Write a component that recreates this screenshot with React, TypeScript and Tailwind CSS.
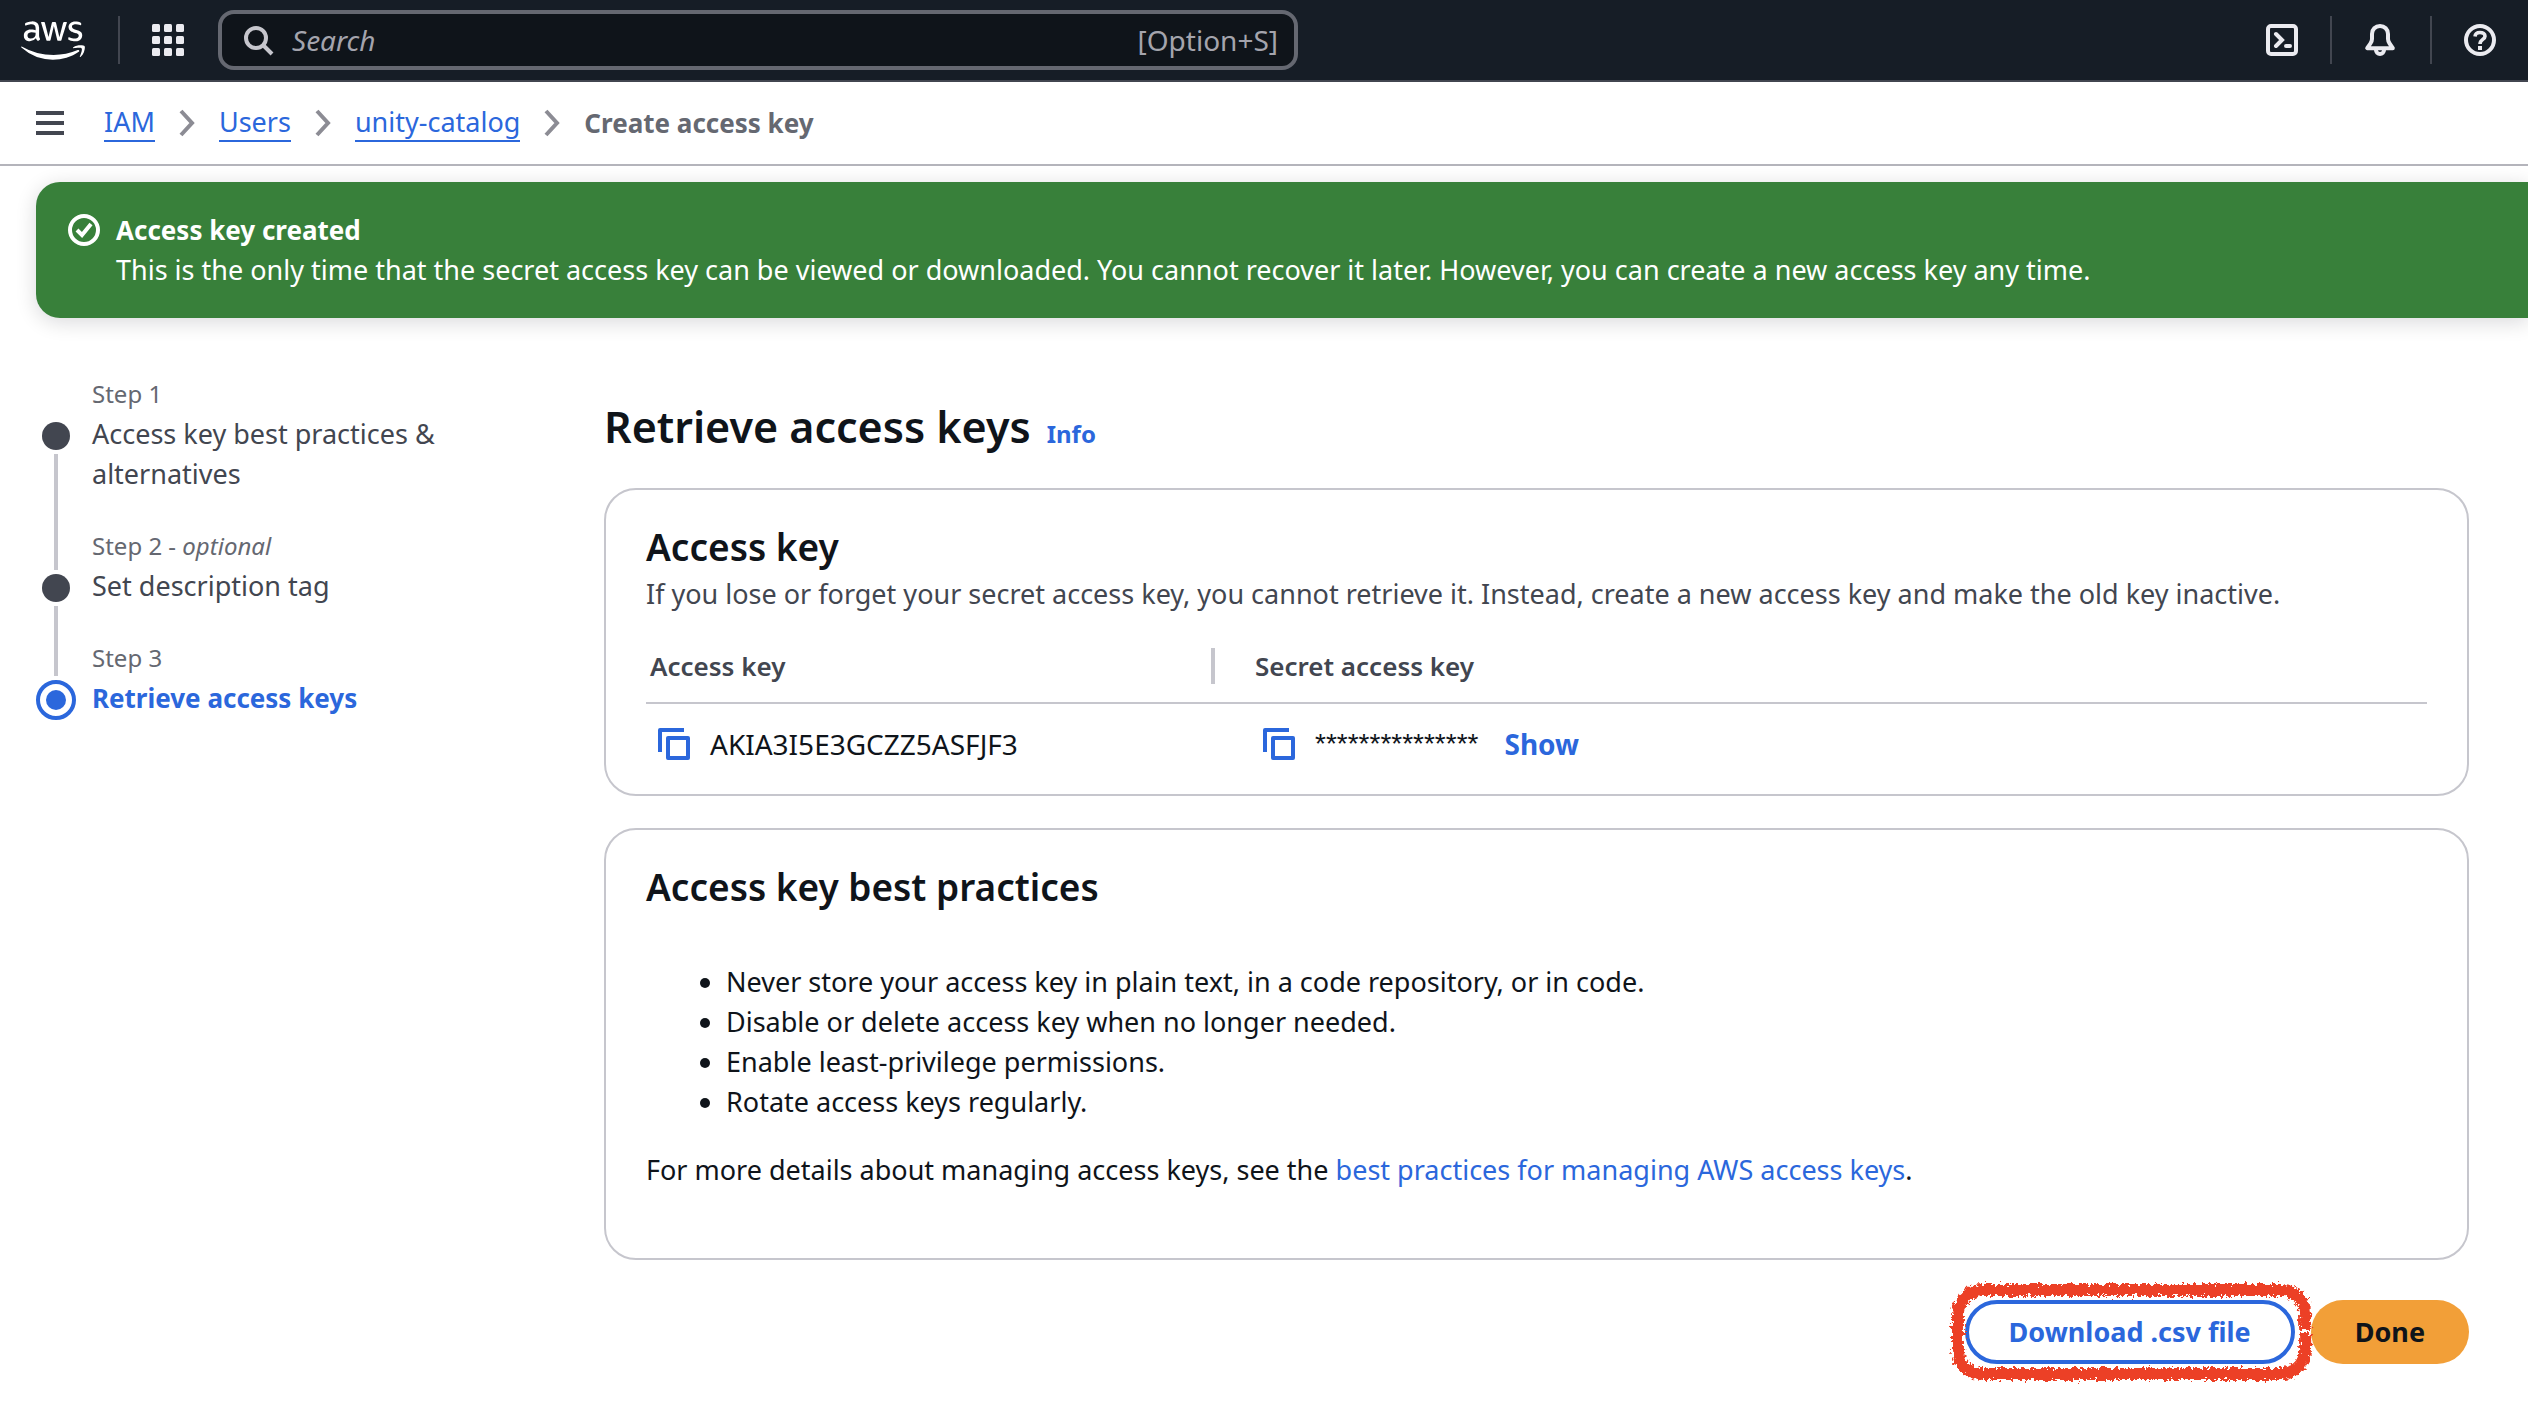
import type { ReactNode } from 'react';
import { FaAws } from 'react-icons/fa';

function Icon({ children, className = '' }: { children: ReactNode; className?: string }) {
  return (
    <svg
      viewBox="0 0 32 32"
      fill="none"
      stroke="currentColor"
      strokeWidth="4"
      aria-hidden="true"
      className={`size-8 shrink-0 ${className}`}
    >
      {children}
    </svg>
  );
}

function AppsIcon() {
  return (
    <Icon>
      <g fill="currentColor" stroke="none">
        {[0, 12, 24].map((y) =>
          [0, 12, 24].map((x) => <rect key={`${x}-${y}`} x={x} y={y} width="8" height="8" rx="1.5" />),
        )}
      </g>
    </Icon>
  );
}

function CopyIcon() {
  return (
    <Icon>
      <path d="M26 2H2v22" strokeLinejoin="round" />
      <rect x="10" y="10" width="20" height="20" strokeLinejoin="round" />
    </Icon>
  );
}

function Chevron() {
  return (
    <svg viewBox="0 0 16 28" fill="none" stroke="#8c8c94" strokeWidth="4" aria-hidden="true" className="h-7 w-4 shrink-0">
      <path d="M2 2l11 12L2 26" />
    </svg>
  );
}

/* Hand-drawn marker outline around a highlighted button. */
function MarkerOutline() {
  return (
    <svg
      viewBox="0 0 371 112"
      preserveAspectRatio="none"
      fill="none"
      stroke="#ec4125"
      aria-hidden="true"
      className="pointer-events-none absolute -left-5 -top-6 h-[calc(100%+48px)] w-[calc(100%+40px)]"
    >
      <defs>
        <filter id="marker" x="0" y="0" width="371" height="112" filterUnits="userSpaceOnUse">
          <feTurbulence type="fractalNoise" baseFrequency="0.3" numOctaves="3" seed="4" result="noise" />
          <feDisplacementMap in="SourceGraphic" in2="noise" scale="10" xChannelSelector="R" yChannelSelector="G" />
        </filter>
      </defs>
      <path
        filter="url(#marker)"
        d="M361 54V38a24 24 0 0 0-24-24H37a24 24 0 0 0-24 24v36a24 24 0 0 0 24 24h300a24 24 0 0 0 24-24V57"
        strokeWidth="12"
      />
    </svg>
  );
}

function Header() {
  return (
    <header className="flex h-[82px] items-center border-b-2 border-[#424650] bg-[#161d26] text-[#ebebf0]">
      <a href="#home" aria-label="AWS home" className="ml-[21px] text-white">
        <FaAws className="h-[51px] w-16" />
      </a>
      <div className="ml-[33px] h-12 w-0.5 bg-[#424650]" />
      <button type="button" aria-label="Services" className="ml-8">
        <AppsIcon />
      </button>
      <label className="ml-[34px] flex h-[60px] w-[1080px] items-center rounded-2xl border-4 border-[#656871] bg-[#0f141a] pr-4 pl-5">
        <Icon className="text-[#c6c6cd]">
          <circle cx="14" cy="14" r="10" />
          <path d="M21 21l9 9" />
        </Icon>
        <input
          type="search"
          aria-label="Search"
          placeholder="Search"
          className="ml-[18px] min-w-0 flex-1 bg-transparent text-[28px] leading-10 outline-none placeholder:text-[#a4a4ad] placeholder:italic"
        />
        <span className="text-[28px] text-[#a4a4ad]">[Option+S]</span>
      </label>
      <div className="ml-auto flex items-center pr-8">
        <button type="button" aria-label="CloudShell">
          <Icon>
            <rect x="2" y="2" width="28" height="28" rx="3" />
            <path d="M10 10l6 6-6 6M20 22h4" strokeLinecap="round" />
          </Icon>
        </button>
        <div className="mx-8 h-12 w-0.5 bg-[#424650]" />
        <button type="button" aria-label="Notifications">
          <Icon>
            <path
              d="M16 2c-4.600 0-8 3.400-8 8v5c0 2-.6 3-1.600 4.500L3.200 24.200h25.600l-3.200-4.700C24.600 18 24 17 24 15v-5c0-4.600-3.400-8-8-8z"
              strokeLinejoin="round"
            />
            <path d="M12 26a4 4 0 0 0 8 0" />
          </Icon>
        </button>
        <div className="mr-8 ml-[34px] h-12 w-0.5 bg-[#424650]" />
        <button type="button" aria-label="Help">
          <Icon>
            <circle cx="16" cy="16" r="14" />
            <path d="M11 12.500C11.200 10 13 8.500 16 8.500s5 1.500 5 3.700c0 3.300-5 3.300-5 7.800" strokeWidth="3.600" />
            <path d="M16 22v4" />
          </Icon>
        </button>
      </div>
    </header>
  );
}

function Breadcrumbs() {
  const links = ['IAM', 'Users', 'unity-catalog'];
  return (
    <div className="flex h-[84px] items-center border-b-2 border-[#b4b4bb] pl-9">
      <button type="button" aria-label="Open navigation" className="flex w-7 flex-col gap-1.5">
        <span className="h-1 bg-[#424650]" />
        <span className="h-1 bg-[#424650]" />
        <span className="h-1 bg-[#424650]" />
      </button>
      <nav aria-label="Breadcrumbs" className="ml-10">
        <ol className="flex items-center">
          {links.map((text) => (
            <li key={text} className="flex items-center">
              <a href={`#${text}`} className="border-b-2 border-[#2b67dc] leading-9 text-[#2b67dc]">
                {text}
              </a>
              <span className="mx-6">
                <Chevron />
              </span>
            </li>
          ))}
          <li className="text-[26px] font-bold text-[#656871]" aria-current="page">
            Create access key
          </li>
        </ol>
      </nav>
    </div>
  );
}

const steps = [
  { label: 'Step 1', title: 'Access key best practices & alternatives' },
  { label: 'Step 2', optional: true, title: 'Set description tag' },
  { label: 'Step 3', title: 'Retrieve access keys', current: true },
];

function Steps() {
  return (
    <nav aria-label="Steps" className="w-[568px] shrink-0 pt-14 pl-9">
      <ol className="w-[420px]">
        {steps.map((step, i) => (
          <li key={step.label} className="flex gap-4">
            <div className="flex w-10 shrink-0 flex-col items-center">
              <div className={`w-1 ${i > 0 ? 'bg-[#c6c6cd]' : ''} ${step.current ? 'h-[38px]' : 'h-11'}`} />
              {step.current ? (
                <div className="my-1 flex size-10 items-center justify-center rounded-full border-4 border-[#2b67dc]">
                  <div className="size-5 rounded-full bg-[#2b67dc]" />
                </div>
              ) : (
                <>
                  <div className="my-1 size-7 rounded-full bg-[#424650]" />
                  <div className="w-1 flex-1 bg-[#c6c6cd]" />
                </>
              )}
            </div>
            <div className="flex-1 pb-8">
              <div className="text-[24px] leading-10 text-[#656871]">
                {step.label}
                {step.optional && (
                  <>
                    {' - '}
                    <i>optional</i>
                  </>
                )}
              </div>
              <div className={step.current ? 'text-[26px] font-bold text-[#2b67dc]' : 'max-w-[360px] text-[#424650]'}>
                {step.title}
              </div>
            </div>
          </li>
        ))}
      </ol>
    </nav>
  );
}

function AccessKeyCard() {
  return (
    <section className="rounded-[32px] border-2 border-[#c6c6cd] px-10 pt-9 pb-[11px]">
      <h2 className="text-[37px] leading-[42px] font-semibold">Access key</h2>
      <p className="mt-1.5 text-[#424650]">
        If you lose or forget your secret access key, you cannot retrieve it. Instead, create a new access key and make
        the old key inactive.
      </p>
      <table className="mt-4 w-full table-fixed text-left">
        <thead>
          <tr className="h-[73px] border-b-2 border-[#c6c6cd] text-[26px] text-[#424650]">
            <th scope="col" className="w-[569px] pl-1 font-semibold">
              <div className="border-r-4 border-[#c6c6cd] leading-9">Access key</div>
            </th>
            <th scope="col" className="pl-10 font-semibold">
              Secret access key
            </th>
          </tr>
        </thead>
        <tbody>
          <tr className="h-20">
            <td className="pl-3">
              <div className="flex items-center gap-5 text-[28px]">
                <button type="button" aria-label="Copy access key" className="text-[#2b67dc]">
                  <CopyIcon />
                </button>
                AKIA3I5E3GCZZ5ASFJF3
              </div>
            </td>
            <td className="pl-12">
              <div className="flex items-center text-[28px]">
                <button type="button" aria-label="Copy secret access key" className="text-[#2b67dc]">
                  <CopyIcon />
                </button>
                <span className="ml-5 font-['Liberation_Sans',sans-serif]">***************</span>
                <button type="button" className="ml-[26px] font-bold text-[#2b67dc]">
                  Show
                </button>
              </div>
            </td>
          </tr>
        </tbody>
      </table>
    </section>
  );
}

const practices = [
  'Never store your access key in plain text, in a code repository, or in code.',
  'Disable or delete access key when no longer needed.',
  'Enable least-privilege permissions.',
  'Rotate access keys regularly.',
];

function BestPracticesCard() {
  return (
    <section className="mt-8 rounded-[32px] border-2 border-[#c6c6cd] px-10 pt-9 pb-[68px]">
      <h2 className="text-[37px] leading-[42px] font-semibold">Access key best practices</h2>
      <ul className="mt-[54px] list-disc pl-20">
        {practices.map((text) => (
          <li key={text}>{text}</li>
        ))}
      </ul>
      <p className="mt-7">
        For more details about managing access keys, see the{' '}
        <a href="#best-practices" className="text-[#2b67dc]">
          best practices for managing AWS access keys
        </a>
        .
      </p>
    </section>
  );
}

export default function App() {
  return (
    <div className="min-h-screen overflow-x-hidden bg-white font-['Noto_Sans',sans-serif] text-[27px] leading-10 text-[#0f141a]">
      <Header />
      <Breadcrumbs />
      <div
        role="status"
        className="mt-4 ml-9 flex gap-4 rounded-l-3xl bg-[#38803a] px-8 py-7 text-white shadow-[0_4px_20px_1px_rgba(0,7,22,0.14)]"
      >
        <Icon className="mt-1">
          <circle cx="16" cy="16" r="14" />
          <path d="M9 16l5 5 9-11" />
        </Icon>
        <div>
          <div className="text-[26px] font-bold">Access key created</div>
          <p>
            This is the only time that the secret access key can be viewed or downloaded. You cannot recover it later.
            However, you can create a new access key any time.
          </p>
        </div>
      </div>
      <div className="flex">
        <Steps />
        <main className="min-w-0 flex-1 pt-[81px] pr-[59px] pl-9">
          <div className="mb-[33px] flex items-baseline gap-4">
            <h1 className="text-[43px] leading-14 font-semibold">Retrieve access keys</h1>
            <a href="#info" className="text-[24px] font-bold text-[#2b67dc]">
              Info
            </a>
          </div>
          <AccessKeyCard />
          <BestPracticesCard />
          <div className="mt-10 flex justify-end gap-4">
            <div className="relative">
              <button
                type="button"
                className="h-16 rounded-full border-4 border-[#2b67dc] px-10 font-bold text-[#2b67dc]"
              >
                Download .csv file
              </button>
              <MarkerOutline />
            </div>
            <button type="button" className="h-16 rounded-full bg-[#f29f38] px-11 font-bold">
              Done
            </button>
          </div>
        </main>
      </div>
    </div>
  );
}
